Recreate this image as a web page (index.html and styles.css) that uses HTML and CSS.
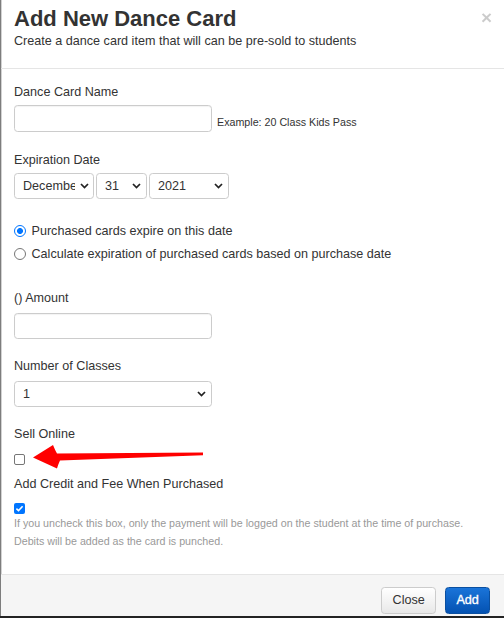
FILE: index.html
```html
<!DOCTYPE html>
<html lang="en">
<head>
<meta charset="utf-8">
<title>Add New Dance Card</title>
<link rel="stylesheet" href="styles.css">
</head>
<body>
<div class="modal">
  <div class="header">
    <div class="titles">
      <h1 class="title">Add New Dance Card</h1>
      <p class="subtitle">Create a dance card item that will can be pre-sold to students</p>
    </div>
    <span class="close">×</span>
  </div>

  <div class="body">
    <div class="group">
      <label class="lbl">Dance Card Name</label>
      <div class="hint-row">
        <input class="field field-tall" type="text">
        <span class="hint">Example: 20 Class Kids Pass</span>
      </div>
    </div>

    <div class="group g-exp">
      <label class="lbl">Expiration Date</label>
      <div class="selects">
        <div class="select sel-month"><span class="sel-text">December</span><svg class="chev chev-tight" viewBox="0 0 9 6" width="9" height="6"><polyline points="1,1 4.5,4.6 8,1"/></svg></div>
        <div class="select sel-day"><span class="sel-text">31</span><svg class="chev" viewBox="0 0 9 6" width="9" height="6"><polyline points="1,1 4.5,4.6 8,1"/></svg></div>
        <div class="select sel-year"><span class="sel-text">2021</span><svg class="chev" viewBox="0 0 9 6" width="9" height="6"><polyline points="1,1 4.5,4.6 8,1"/></svg></div>
      </div>
    </div>

    <div class="radios">
      <div class="radio-row"><span class="radio radio-on"></span><span class="radio-text">Purchased cards expire on this date</span></div>
      <div class="radio-row radio-row-2"><span class="radio"></span><span class="radio-text">Calculate expiration of purchased cards based on purchase date</span></div>
    </div>

    <div class="group g-amount">
      <label class="lbl lbl-wide">() Amount</label>
      <input class="field" type="text">
    </div>

    <div class="group g-classes">
      <label class="lbl lbl-wide">Number of Classes</label>
      <div class="select sel-full"><span class="sel-text">1</span><svg class="chev" viewBox="0 0 9 6" width="9" height="6"><polyline points="1,1 4.5,4.6 8,1"/></svg></div>
    </div>

    <div class="group g-sell">
      <label class="lbl">Sell Online</label>
      <span class="check check-sell"></span>
    </div>

    <div class="group g-credit">
      <label class="lbl">Add Credit and Fee When Purchased</label>
      <span class="check check-on check-credit"><svg viewBox="0 0 11 11" width="11" height="11"><polyline points="2.4,5.6 4.5,7.7 8.6,3.2"/></svg></span>
      <div class="help">
        <div>If you uncheck this box, only the payment will be logged on the student at the time of purchase.</div>
        <div>Debits will be added as the card is punched.</div>
      </div>
    </div>
  </div>

  <div class="footer">
    <button class="btn btn-close" type="button">Close</button>
    <button class="btn btn-add" type="button">Add</button>
  </div>

  <svg class="arrow" viewBox="0 0 180 34" width="180" height="34">
    <path d="M5,17.5 L25,5 Q27,10 29,13.6 L175,12.6 L175,15.3 L32,20.6 Q30,25 29,28.5 Z"/>
  </svg>
</div>
</body>
</html>
```

FILE: styles.css
```css
html, body {
  margin: 0;
  padding: 0;
}

body {
  background: #232323;
  font-family: "Liberation Sans", Arial, sans-serif;
  color: #333;
  width: 504px;
  height: 618px;
  overflow: hidden;
}

.modal {
  position: relative;
  height: 616px;
  box-sizing: border-box;
  background: #fff;
  border-left: 1px solid #7d7d7d;
  box-shadow: inset 1px 0 0 #d2d2d2;
  display: flex;
  flex-direction: column;
}

/* header */
.header {
  display: flex;
  align-items: flex-start;
  padding: 6px 12px 18px 13px;
  border-bottom: 1px solid #e5e5e5;
}

.titles {
  flex: 1;
}

.title {
  margin: 0;
  font-size: 22px;
  line-height: 26px;
  font-weight: bold;
  color: #333;
}

.subtitle {
  margin: 0;
  font-size: 12.6px;
  line-height: 18px;
}

.close {
  margin-top: 2px;
  font-size: 19px;
  line-height: 19px;
  font-weight: bold;
  color: #000;
  opacity: 0.2;
}

/* body */
.body {
  flex: 1;
  padding: 14px 14px 0 13px;
}

.lbl {
  display: block;
  font-size: 12.6px;
  line-height: 18px;
  margin-bottom: 4px;
}

.lbl-wide {
  margin-bottom: 6px;
}

.field {
  display: block;
  width: 198px;
  height: 26px;
  box-sizing: border-box;
  margin: 0;
  padding: 0 8px;
  border: 1px solid #ccc;
  border-radius: 3.6px;
  background: #fff;
  box-shadow: inset 0 1px 1px rgba(0, 0, 0, 0.05);
  font-family: inherit;
  font-size: 12.6px;
  outline: none;
}

.field-tall {
  height: 27px;
}

.hint-row {
  display: flex;
  align-items: flex-end;
  gap: 5px;
}

.hint {
  font-size: 10.7px;
  line-height: 14px;
  margin-bottom: 3px;
  color: #333;
}

.g-exp {
  margin-top: 19px;
}

.selects {
  display: flex;
  gap: 2px;
}

.select {
  display: flex;
  align-items: center;
  height: 26px;
  box-sizing: border-box;
  border: 1px solid #ccc;
  border-radius: 3.6px;
  background: #fff;
  padding-left: 8px;
  font-size: 12.6px;
  line-height: 18px;
  color: #333;
}

.sel-text {
  flex: 1;
  overflow: hidden;
  white-space: nowrap;
}

.sel-month {
  width: 80px;
}

.sel-month .sel-text {
  flex: 0 0 52px;
  margin-right: 5px;
}

.sel-day {
  width: 51px;
}

.sel-year {
  width: 80px;
}

.sel-full {
  width: 198px;
}

.chev {
  flex: 0 0 auto;
  margin-right: 5px;
  fill: none;
  stroke: #222;
  stroke-width: 1.7;
}

.chev-tight {
  margin-right: 3px;
}

/* radios */
.radios {
  margin-top: 23px;
}

.radio-row {
  display: flex;
  align-items: center;
  height: 18px;
  font-size: 12.6px;
  line-height: 18px;
}

.radio-row-2 {
  margin-top: 5px;
}

.radio {
  width: 12px;
  height: 12px;
  box-sizing: border-box;
  border-radius: 50%;
  border: 1px solid #767676;
  background: #fff;
  margin-left: -0.5px;
  margin-right: 6px;
  flex: 0 0 auto;
}

.radio-on {
  border: 1.3px solid #0075ff;
  background: radial-gradient(circle, #0075ff 0, #0075ff 2.7px, #fff 3.2px);
}

.g-amount {
  margin-top: 26px;
}

.g-classes {
  margin-top: 18px;
}

.g-sell {
  margin-top: 18px;
}

.g-credit {
  margin-top: 10px;
}

/* checkboxes */
.check {
  display: block;
  width: 11px;
  height: 11px;
  box-sizing: border-box;
  border: 1px solid #767676;
  border-radius: 2px;
  background: #fff;
}

.check-sell {
  margin-top: 11px;
}

.check-credit {
  margin-top: 10px;
}

.check-on {
  border: none;
  background: #0075ff;
}

.check-on svg {
  display: block;
  fill: none;
  stroke: #fff;
  stroke-width: 1.6;
}

.help {
  font-size: 10.7px;
  line-height: 18.4px;
  color: #999;
}

/* footer */
.footer {
  display: flex;
  justify-content: flex-end;
  gap: 8.6px;
  padding: 12px 13.7px 2px 13px;
  border-top: 1px solid #e5e5e5;
  background: #f5f5f5;
}

.btn {
  height: 27px;
  box-sizing: border-box;
  padding: 0 10.5px;
  border: 1px solid #ccc;
  border-radius: 3.6px;
  font-family: inherit;
  font-size: 12.6px;
  line-height: 25px;
}

.btn-close {
  background: linear-gradient(#ffffff, #e8e8e8);
  color: #333;
}

.btn-add {
  background: linear-gradient(#1a74d9, #0452b2);
  border-color: #0a4fa0;
  color: #fff;
  -webkit-text-stroke: 0.35px #fff;
}

/* annotation arrow */
.arrow {
  position: absolute;
  left: 27px;
  top: 440px;
  fill: #ff0000;
  filter: blur(0.4px);
}
```
